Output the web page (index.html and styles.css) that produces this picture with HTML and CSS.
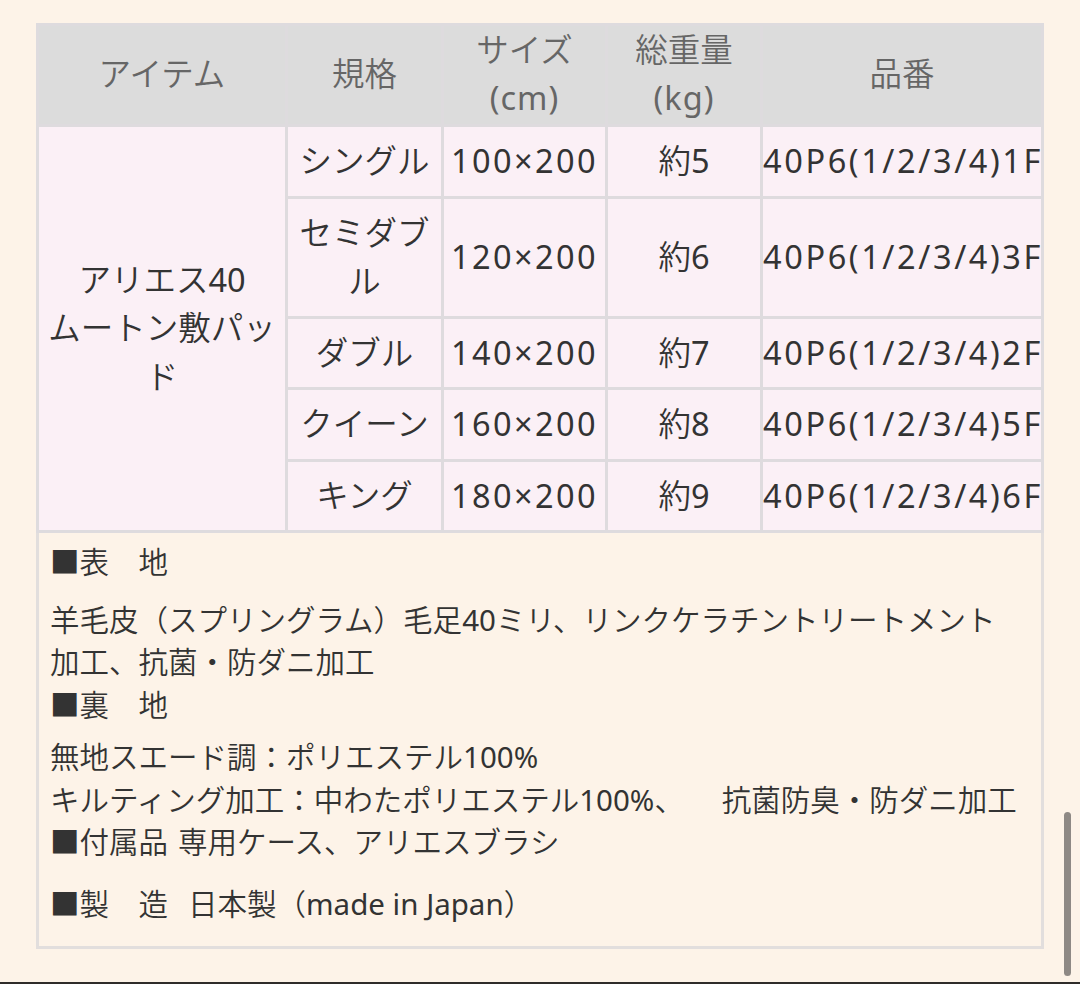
FILE: index.html
```html
<!DOCTYPE html>
<html lang="ja">
<head>
<meta charset="utf-8">
<title>アリエス40 ムートン敷パッド</title>
<link rel="stylesheet" href="styles.css">
</head>
<body>
<div class="page">
  <div class="spec">
    <table class="spec-table">
      <colgroup>
        <col class="c-item"><col class="c-std"><col class="c-size"><col class="c-weight"><col class="c-code">
      </colgroup>
      <thead>
        <tr>
          <th>アイテム</th>
          <th>規格</th>
          <th>サイズ<br><span class="lat">(cm)</span></th>
          <th>総重量<br><span class="lat">(kg)</span></th>
          <th>品番</th>
        </tr>
      </thead>
      <tbody>
        <tr>
          <td rowspan="5" class="item">アリエス<span class="lat">40</span><br>ムートン敷パッ<br>ド</td>
          <td>シングル</td><td class="num">100×200</td><td>約<span class="lat">5</span></td><td class="code">40P6(1/2/3/4)1F</td>
        </tr>
        <tr>
          <td>セミダブ<br>ル</td><td class="num">120×200</td><td>約<span class="lat">6</span></td><td class="code">40P6(1/2/3/4)3F</td>
        </tr>
        <tr>
          <td>ダブル</td><td class="num">140×200</td><td>約<span class="lat">7</span></td><td class="code">40P6(1/2/3/4)2F</td>
        </tr>
        <tr>
          <td>クイーン</td><td class="num">160×200</td><td>約<span class="lat">8</span></td><td class="code">40P6(1/2/3/4)5F</td>
        </tr>
        <tr>
          <td>キング</td><td class="num">180×200</td><td>約<span class="lat">9</span></td><td class="code">40P6(1/2/3/4)6F</td>
        </tr>
      </tbody>
    </table>
    <div class="notes">
      <p class="n-a">■表　地</p>
      <p class="n-b">羊毛皮（スプリングラム）毛足<span class="lat">40</span>ミリ、リンクケラチントリートメント<br>加工、抗菌・防ダニ加工<br>■裏　地</p>
      <p class="n-c">無地スエード調：ポリエステル<span class="lat">100%</span><br>キルティング加工：中わたポリエステル<span class="lat">100%</span>、　<span class="sp3"></span>抗菌防臭・防ダニ加工<br>■付属品<span class="sp"></span>専用ケース、アリエスブラシ</p>
      <p class="n-d">■製　造<span class="sp2"></span>日本製（<span class="lat">made in Japan</span>）</p>
    </div>
  </div>
  <div class="homebar"></div>
  <div class="scrollbar"></div>
</div>
</body>
</html>
```
FILE: styles.css
```css
html, body {
  margin: 0;
  padding: 0;
}
body {
  background: #fdf3e8;
  font-family: "Noto Sans", "Noto Sans CJK JP", sans-serif;
  font-weight: 350;
  color: #333333;
}
.lat {
  font-weight: 400;
}
.page {
  position: relative;
  width: 1080px;
  height: 984px;
  overflow: hidden;
  padding-top: 23px;
  box-sizing: border-box;
}
.spec {
  width: 1008px;
  margin-left: 36px;
}
.spec-table {
  width: 1008px;
  table-layout: fixed;
  border-collapse: separate;
  border-spacing: 3px;
  background: #dedbde;
  font-size: 32.5px;
}
.spec-table thead tr {
  background: #dcdcdc;
}
.c-item { width: 246px; }
.c-std { width: 153px; }
.c-size { width: 161px; }
.c-weight { width: 152px; }
.c-code { width: 278px; }
.spec-table th {
  background: #dcdcdc;
  color: #666666;
  font-weight: 350;
  line-height: 48px;
  padding: 0 0 2px;
  text-align: center;
  vertical-align: middle;
}
.spec-table th .lat {
  letter-spacing: 1px;
}
.spec-table td {
  background: #fbf0f6;
  color: #333333;
  line-height: 48.5px;
  padding: 10px 0 10px;
  text-align: center;
  vertical-align: middle;
  white-space: nowrap;
}
.spec-table td.num {
  font-weight: 400;
  letter-spacing: 2.4px;
}
.spec-table td.code {
  font-weight: 400;
  text-align: left;
  letter-spacing: 2.6px;
}
.notes {
  border: 3px solid #e2dedd;
  border-top: 0;
  padding: 8px 11px 21px;
  font-size: 29.5px;
  line-height: 42.5px;
  color: #333333;
}
.notes p {
  margin: 0;
  white-space: nowrap;
}
.n-b { margin-top: 15px !important; }
.n-c { margin-top: 10px !important; }
.n-d { margin-top: 19px !important; }
.sp {
  display: inline-block;
  width: 10px;
}
.sp2 {
  display: inline-block;
  width: 20px;
}
.sp3 {
  display: inline-block;
  width: 23px;
}
.homebar {
  position: absolute;
  left: 0;
  right: 0;
  bottom: 0;
  height: 2px;
  background: #2f2c2a;
}
.scrollbar {
  position: absolute;
  right: 9px;
  top: 812px;
  width: 7px;
  height: 164px;
  border-radius: 4px;
  background: #8e8985;
}
```
